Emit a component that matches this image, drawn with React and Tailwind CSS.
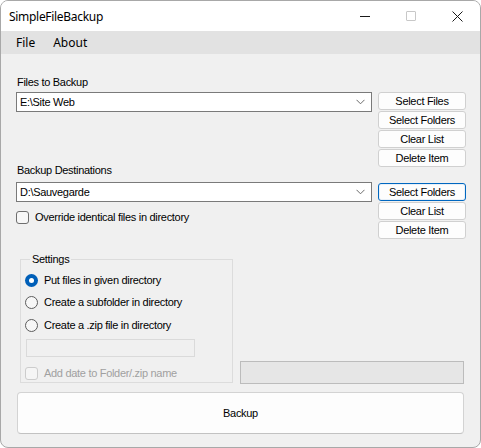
import React from "react";

function Btn({ children, focused }) {
  return (
    <div
      className={
        "h-[18px] w-[88px] flex items-center justify-center rounded-[3px] bg-[#fdfdfd] border " +
        (focused ? "border-[#0067c0] shadow-[inset_0_0_0_1px_#e8f0f8]" : "border-[#d0d0d0]")
      }
    >
      {children}
    </div>
  );
}

function Combo({ value }) {
  return (
    <div className="h-[20px] w-[356px] bg-white border border-[#7a7a7a] flex items-center pl-[3px] pr-[5px]">
      <span className="flex-1">{value}</span>
      <svg width="9" height="6" viewBox="0 0 9 6" className="mr-[1px]">
        <path d="M0.5 0.8 L4.5 4.8 L8.5 0.8" fill="none" stroke="#6b6b6b" strokeWidth="1" />
      </svg>
    </div>
  );
}

function Radio({ checked, label }) {
  return (
    <div className="h-[16px] flex items-center">
      {checked ? (
        <div className="w-[13px] h-[13px] rounded-full bg-[#005fb8] flex items-center justify-center">
          <div className="w-[5px] h-[5px] rounded-full bg-white" />
        </div>
      ) : (
        <div className="w-[13px] h-[13px] rounded-full border border-[#5c5c5c] bg-[#f7f7f7]" />
      )}
      <span className="ml-[6px]">{label}</span>
    </div>
  );
}

export default function App() {
  return (
    <div className="w-[481px] h-[448px] bg-white">
      <div className="w-full h-full rounded-[8px] border border-[#a8a8a8] overflow-hidden flex flex-col bg-[#f0f0f0] font-['Liberation_Sans',Arial,sans-serif] text-[11px] leading-[13px] tracking-[-0.3px] text-black">
        {/* Title bar */}
        <div className="h-[30px] bg-white flex items-center font-['Noto_Sans',sans-serif] text-[12px] tracking-normal">
          <span className="ml-[8px] tracking-[-0.3px]">SimpleFileBackup</span>
          <div className="ml-auto flex items-center h-full">
            <div className="w-[46px] h-full flex items-center justify-center">
              <div className="w-[10px] h-px bg-[#1a1a1a]" />
            </div>
            <div className="w-[46px] h-full flex items-center justify-center">
              <div className="w-[10px] h-[10px] border border-[#c8c8c8] rounded-[1px]" />
            </div>
            <div className="w-[46px] h-full flex items-center justify-center">
              <svg width="11" height="11" viewBox="0 0 11 11">
                <path d="M0.5 0.5 L10.5 10.5 M10.5 0.5 L0.5 10.5" stroke="#1a1a1a" strokeWidth="1" />
              </svg>
            </div>
          </div>
        </div>
        {/* Menu bar */}
        <div className="h-[23px] bg-[#e2e2e2] flex items-center font-['Noto_Sans',sans-serif] text-[12px] tracking-normal">
          <span className="ml-[15px]">File</span>
          <span className="ml-[18px]">About</span>
        </div>
        {/* Body */}
        <div className="flex-1 pl-[15px]">
          <div className="flex">
            <div className="flex flex-col w-[356px]">
              <div className="mt-[22px] ml-[1px]">Files to Backup</div>
              <div className="mt-[3px]">
                <Combo value="E:\Site Web" />
              </div>
              <div className="mt-[52px] ml-[1px]">Backup Destinations</div>
              <div className="mt-[5px]">
                <Combo value="D:\Sauvegarde" />
              </div>
              <div className="mt-[9px] flex items-center">
                <div className="w-[13px] h-[13px] rounded-[3px] border border-[#6e6e6e] bg-[#f7f7f7]" />
                <span className="ml-[6px]">Override identical files in directory</span>
              </div>
            </div>
            <div className="ml-[6px] flex flex-col">
              <div className="mt-[38px] flex flex-col gap-[1px]">
                <Btn>Select Files</Btn>
                <Btn>Select Folders</Btn>
                <Btn>Clear List</Btn>
                <Btn>Delete Item</Btn>
              </div>
              <div className="mt-[16px] flex flex-col gap-[1px]">
                <Btn focused>Select Folders</Btn>
                <Btn>Clear List</Btn>
                <Btn>Delete Item</Btn>
              </div>
            </div>
          </div>
          <div className="flex items-end mt-[14px]">
            <fieldset className="ml-[4px] w-[213px] border border-[#dcdcdc] pl-[4px] pb-[1px]">
              <legend className="ml-[5px] px-[2px]">Settings</legend>
              <div className="flex flex-col">
                <div className="mt-[6px]">
                  <Radio checked label="Put files in given directory" />
                </div>
                <div className="mt-[6px]">
                  <Radio label="Create a subfolder in directory" />
                </div>
                <div className="mt-[7px]">
                  <Radio label="Create a .zip file in directory" />
                </div>
                <div className="mt-[6px] ml-[1px] w-[169px] h-[18px] border border-[#dadada] bg-[#f0f0f0]" />
                <div className="mt-[8px] h-[16px] flex items-center">
                  <div className="w-[13px] h-[13px] rounded-[3px] border border-[#cccccc] bg-[#f5f5f5]" />
                  <span className="ml-[6px] text-[#a0a0a0]">Add date to Folder/.zip name</span>
                </div>
              </div>
            </fieldset>
            <div className="ml-[7px] w-[224px] h-[23px] mb-[-1px] bg-[#e6e6e6] border border-[#bcbcbc]" />
          </div>
          <div className="mt-[9px] ml-[1px] w-[447px] h-[42px] rounded-[4px] bg-[#fdfdfd] border border-[#d3d3d3] border-b-[#c2c2c2] flex items-center justify-center">
            Backup
          </div>
        </div>
      </div>
    </div>
  );
}
